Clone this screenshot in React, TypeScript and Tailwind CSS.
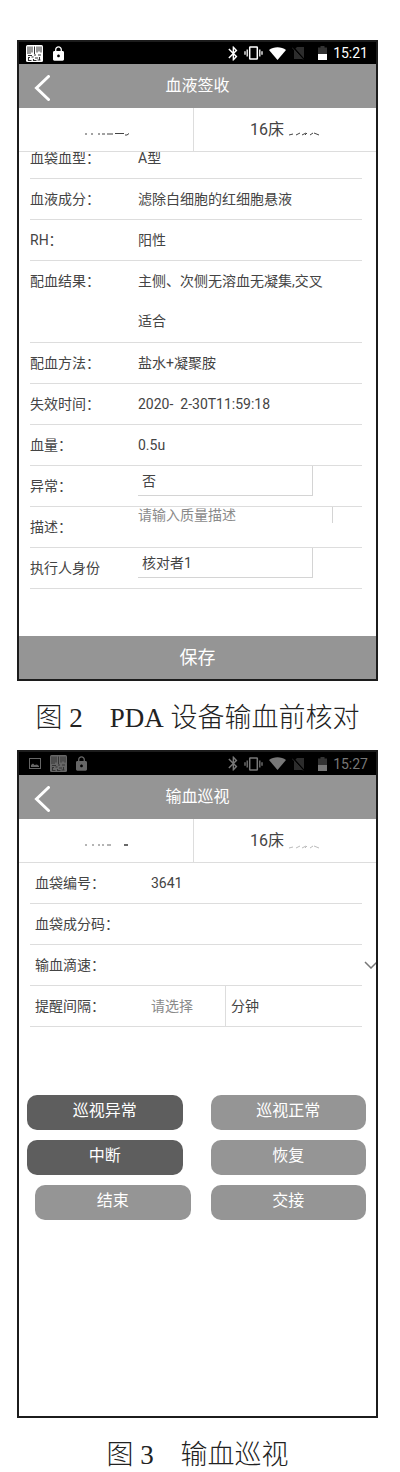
import React, { ReactNode } from "react";

const BackIcon = () => (
	<svg viewBox="0 0 16 26" className="h-[26px] w-4" fill="none" stroke="currentColor" strokeWidth="3">
		<path d="M14.5 1.5 2.5 13l12 11.5" strokeLinecap="round" />
	</svg>
);

const BarcodeIcon = () => (
	<svg viewBox="0 0 17 17" className="size-[17px]">
		<rect width="17" height="17" rx="1.5" fill="currentColor" />
		<path
			d="M2 1.5v7.500M4 1.5v7.500M6 1.5v6M8.500 1.5v7.500M11 1.5v6M13 1.5v5M15 1.5v6"
			stroke="#333"
			strokeWidth="1"
			fill="none"
		/>
		<path
			d="M2 10.500h4M8 10h2M12 10h3M2 12.5h2M5.5 12h2M9 13h3M13.5 12v3M2.5 13v2.5h3M7.5 14v1.5h3M11.5 15h3"
			stroke="#333"
			strokeWidth="1.1"
			fill="none"
		/>
	</svg>
);

const LockIcon = () => (
	<svg viewBox="4 1 16 21" className="h-[15px] w-[11px]" fill="currentColor">
		<path d="M18 8h-1V6c0-2.76-2.24-5-5-5S7 3.24 7 6v2H6c-1.1 0-2 .9-2 2v10c0 1.1.9 2 2 2h12c1.1 0 2-.9 2-2V10c0-1.1-.9-2-2-2zm-6 9c-1.1 0-2-.9-2-2s.9-2 2-2 2 .9 2 2-.9 2-2 2zm3.1-9H8.9V6c0-1.71 1.39-3.1 3.1-3.1 1.71 0 3.1 1.39 3.1 3.1v2z" />
	</svg>
);

const PictureIcon = () => (
	<svg viewBox="0 0 12 11" className="h-[11px] w-3">
		<rect x="0.5" y="0.5" width="11" height="10" fill="none" stroke="currentColor" />
		<path d="M2 9V7l2-1.5L5.500 7 8 6.500 10 8v1z" fill="currentColor" />
	</svg>
);

const BluetoothIcon = () => (
	<svg viewBox="4.500 1.500 14 21" className="h-[15px] w-[10px]" fill="currentColor">
		<path d="M17.71 7.71L12 2h-1v7.59L6.41 5 5 6.41 10.59 12 5 17.59 6.41 19 11 14.41V22h1l5.71-5.71-4.3-4.29 4.3-4.29zM13 5.83l1.88 1.88L13 9.59V5.83zm1.88 10.46L13 18.17v-3.76l1.88 1.88z" />
	</svg>
);

const VibrateIcon = () => (
	<svg viewBox="0 0 19 14" className="h-[14px] w-[19px]" fill="none" stroke="currentColor">
		<rect x="5.700" y="1" width="7.600" height="12" rx="0.500" strokeWidth="1.500" />
		<path d="M3.200 3.500v7M15.800 3.500v7" strokeWidth="1.300" />
		<path d="M1 5.200v3.600M18 5.200v3.600" strokeWidth="1.300" />
	</svg>
);

const WifiIcon = () => (
	<svg viewBox="0 0 17 13" className="h-[13px] w-[17px]" fill="currentColor">
		<path d="M8.500 13 0 3C4.500-.7 12.500-.7 17 3z" />
	</svg>
);

const NoSimIcon = () => (
	<svg viewBox="0 0 13 14" className="h-[14px] w-[13px]">
		<path d="M5 1h7v12H2V4z" fill="#2c2c2c" />
		<path d="M1 1l11 12.500" stroke="#000" strokeWidth="1.600" />
		<path d="M0 1.500l11 12" stroke="#333" strokeWidth="0.800" />
	</svg>
);

const BatteryIcon = () => (
	<svg viewBox="0 0 9 14" className="h-[14px] w-[9px]">
		<path d="M0 1.500h2.500V0h4v1.500H9V8H0z" fill="#333" />
		<path d="M0 8h9v6H0z" fill="currentColor" />
	</svg>
);

const StatusBar = ({ time, dim = false }: { time: string; dim?: boolean }) => (
	<div
		className={
			dim
				? "flex h-[23px] items-center bg-black pr-2 pl-[10px] text-[#777]"
				: "flex h-[22px] items-center bg-black pr-2 pl-[7px] text-white"
		}
	>
		<div className={dim ? "flex items-center gap-[9px] text-[#666]" : "flex items-center gap-[10px]"}>
			{dim && <PictureIcon />}
			<BarcodeIcon />
			<LockIcon />
		</div>
		<div className="ml-auto flex items-center gap-[6px]">
			<BluetoothIcon />
			<VibrateIcon />
			<WifiIcon />
			<NoSimIcon />
			<span className="ml-[7px] flex">
				<BatteryIcon />
			</span>
			<time className="text-sm">{time}</time>
		</div>
	</div>
);

const TitleBar = ({ title }: { title: string }) => (
	<header className="grid h-11 grid-cols-[48px_1fr_48px] items-center bg-[#959595] text-white">
		<button type="button" aria-label="返回" className="flex h-11 items-center pt-1 pl-[15px]">
			<BackIcon />
		</button>
		<h1 className="text-center text-base">{title}</h1>
	</header>
);

// names are masked, only the lowest strokes stay visible
const PatientBar = ({ faint = false }: { faint?: boolean }) => (
	<div className="grid h-11 grid-cols-[49%_51%] border-b border-[#ddd] text-[#444]">
		<div className="flex items-center justify-center border-r border-[#ddd] pt-2 pl-1">
			{faint ? (
				<svg viewBox="0 0 46 4" className="h-1 w-[46px]" fill="none" stroke="currentColor">
					<path d="M1 1v2M8 1v2M14 1v2M17 2h2M22 2h4" strokeWidth="0.800" />
					<path d="M39 2h4" strokeWidth="1.600" />
				</svg>
			) : (
				<svg viewBox="0 0 46 4" className="h-1 w-[46px]" fill="none" stroke="currentColor">
					<path d="M1 1v2M7 1v2M14 1v2M17 2h3M22 2h6M30 1.500h9M40 3h2l2-1.500" />
				</svg>
			)}
		</div>
		<div className="flex items-center justify-center gap-1">
			<span className="text-base">16床</span>
			<svg
				viewBox="0 0 32 4"
				className={faint ? "mt-3 h-1 w-8 text-[#bbb]" : "mt-2 h-1 w-8"}
				fill="none"
				stroke="currentColor"
			>
				<path d="M1 3l4-1M8 3l4-2M14 3l4-2M19 1l-2 2M22 3l3-2M26 1l5 2" />
			</svg>
		</div>
	</div>
);

const Row = ({ label, htmlFor, children }: { label: string; htmlFor?: string; children?: ReactNode }) => (
	<div className="flex min-h-[41px] border-b border-[#ddd] text-sm leading-10">
		{htmlFor ? (
			<label htmlFor={htmlFor} className="w-[108px] shrink-0">
				{label}
			</label>
		) : (
			<span className="w-[108px] shrink-0">{label}</span>
		)}
		{children}
	</div>
);

const BoxSelect = ({ id, value }: { id: string; value: string }) => (
	<select
		id={id}
		className="h-[30px] w-[175px] appearance-none rounded-none border-r border-b border-[#d4d4d4] bg-white pl-1 text-sm leading-5"
	>
		<option>{value}</option>
	</select>
);

const Caption = ({ children }: { children: ReactNode }) => (
	<figcaption className="pt-[21px] text-center font-['Liberation_Serif','Noto_Sans_CJK_SC',serif] text-[27px] leading-8 font-light text-[#222]">
		{children}
	</figcaption>
);

const Latin = ({ children }: { children: ReactNode }) => <span className="font-normal">{children}</span>;

const Screen = ({ children }: { children: ReactNode }) => (
	<div className="overflow-hidden border-2 border-[#1c1c1c] bg-white">{children}</div>
);

const ActionButton = ({ children, dark = false }: { children: ReactNode; dark?: boolean }) => (
	<button
		type="button"
		className={
			dark
				? "h-[35px] w-full rounded-[10px] bg-[#5e5e5e] pb-1 text-base text-white"
				: "h-[35px] w-full rounded-[10px] bg-[#959595] pb-1 text-base text-white"
		}
	>
		{children}
	</button>
);

const SignForm = () => (
	<form>
		<div className="mr-[14px] ml-[11px] pb-[47px]">
			<div className="flex h-[27px] items-end overflow-hidden">
				<div className="w-full">
					<Row label="血袋血型：">A型</Row>
				</div>
			</div>
			<Row label="血液成分：">滤除白细胞的红细胞悬液</Row>
			<Row label="RH：">阳性</Row>
			<Row label="配血结果：">
				<p className="w-[190px] pb-px">
					主侧、次侧无溶血无凝集,交叉
					<br />
					适合
				</p>
			</Row>
			<Row label="配血方法：">盐水+凝聚胺</Row>
			<Row label="失效时间：">
				<span className="whitespace-pre">2020-  2-30T11:59:18</span>
			</Row>
			<Row label="血量：">0.5u</Row>
			<Row label="异常：" htmlFor="abnormal">
				<BoxSelect id="abnormal" value="否" />
			</Row>
			<Row label="描述：" htmlFor="description">
				<input
					id="description"
					placeholder="请输入质量描述"
					className="h-4 w-[195px] border-r border-[#d4d4d4] text-sm leading-4 placeholder:text-[#8a8a8a]"
				/>
			</Row>
			<Row label="执行人身份" htmlFor="executor">
				<BoxSelect id="executor" value="核对者1" />
			</Row>
		</div>
		<button type="button" className="block h-[43px] w-full bg-[#959595] text-lg text-white">
			保存
		</button>
	</form>
);

const PatrolForm = () => (
	<form className="pb-[196px]">
		<div className="mr-[14px] ml-[11px] [&_label]:w-[121px] [&_label]:pl-[5px] [&_span]:w-[121px] [&_span]:pl-[5px]">
			<Row label="血袋编号：">3641</Row>
			<Row label="血袋成分码：" />
			<Row label="输血滴速：" htmlFor="speed">
				<div className="relative -mr-[14px] flex-1">
					<select id="speed" className="h-10 w-full appearance-none bg-transparent">
						<option></option>
					</select>
					<svg
						viewBox="0 0 14 8"
						className="pointer-events-none absolute top-4 -right-[2px] h-2 w-[14px]"
						fill="none"
						stroke="#777"
						strokeWidth="1.500"
					>
						<path d="M1 1l6 6 6-6" />
					</svg>
				</div>
			</Row>
			<Row label="提醒间隔：" htmlFor="interval">
				<input
					id="interval"
					placeholder="请选择"
					className="h-10 w-[75px] border-r border-[#ddd] placeholder:text-[#8a8a8a]"
				/>
				<label htmlFor="interval">分钟</label>
			</Row>
		</div>
		<div className="mt-[68px] mr-[10px] ml-2 grid grid-cols-2 gap-x-7 gap-y-[10px]">
			<ActionButton dark>巡视异常</ActionButton>
			<ActionButton>巡视正常</ActionButton>
			<ActionButton dark>中断</ActionButton>
			<ActionButton>恢复</ActionButton>
			<div className="-mr-2 ml-2">
				<ActionButton>结束</ActionButton>
			</div>
			<ActionButton>交接</ActionButton>
		</div>
	</form>
);

const App = () => {
	return (
		<main
			lang="zh-CN"
			className="flex flex-col gap-4 bg-white pt-10 pr-[22px] pl-[17px] font-['Roboto','Noto_Sans_CJK_SC',sans-serif] text-[#444]"
		>
			<figure>
				<Screen>
					<StatusBar time="15:21" />
					<TitleBar title="血液签收" />
					<PatientBar />
					<SignForm />
				</Screen>
				<Caption>
					图 <Latin>2</Latin>　<Latin>PDA</Latin> 设备输血前核对
				</Caption>
			</figure>
			<figure>
				<Screen>
					<StatusBar time="15:27" dim />
					<TitleBar title="输血巡视" />
					<PatientBar faint />
					<PatrolForm />
				</Screen>
				<Caption>
					图 <Latin>3</Latin>　输血巡视
				</Caption>
			</figure>
		</main>
	);
};

export default App;
